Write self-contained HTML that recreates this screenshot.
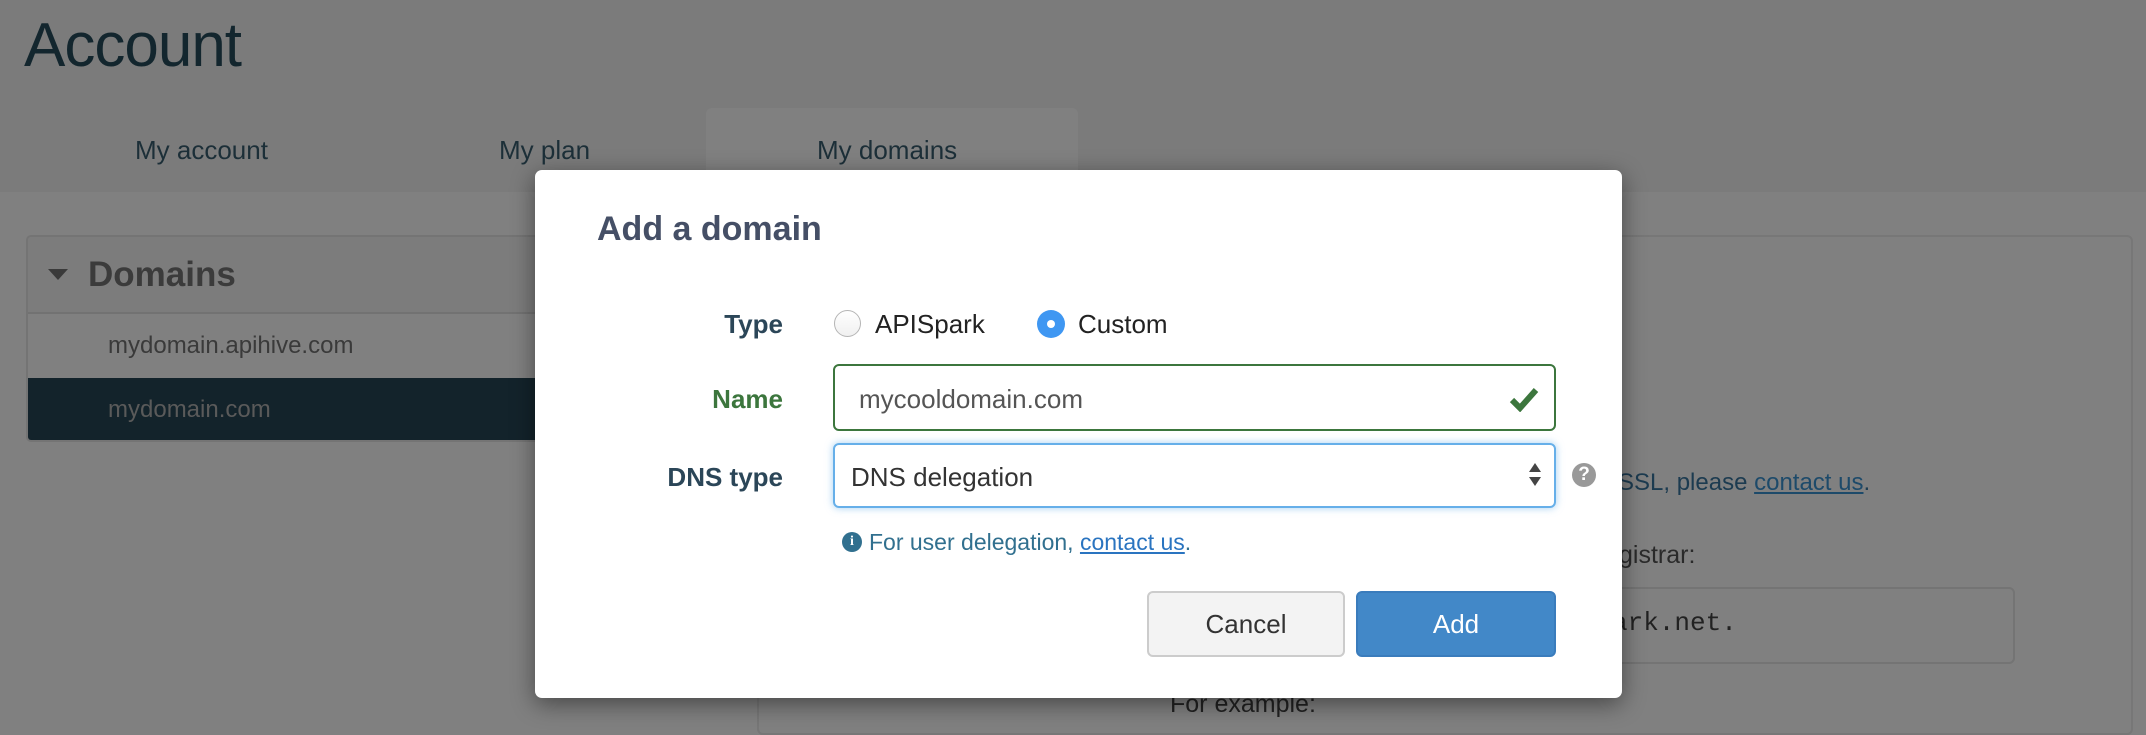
<!DOCTYPE html>
<html><head><meta charset="utf-8"><style>
*{box-sizing:border-box;margin:0;padding:0}
body{width:2146px;height:722px;overflow:hidden;background:#808080;font-family:"Liberation Sans",Arial,sans-serif;position:relative}
.a{position:absolute;white-space:nowrap}
</style></head><body>
<div class="a" style="left:0;top:0;width:2146px;height:192px;background:#7b7b7b"></div>
<div class="a" style="left:24px;top:10px;font-size:62px;color:#13262e;letter-spacing:-1px">Account</div>
<div class="a" style="left:706px;top:108px;width:372px;height:84px;background:#808080;border-radius:6px 6px 0 0"></div>
<div class="a" style="left:135px;top:135px;font-size:26px;color:#1c2f38">My account</div>
<div class="a" style="left:499px;top:135px;font-size:26px;color:#1c2f38">My plan</div>
<div class="a" style="left:817px;top:135px;font-size:26px;color:#1c2f38">My domains</div>

<div class="a" style="left:26px;top:235px;width:560px;height:207px;border:2px solid #747474;border-radius:5px;overflow:hidden">
 <div style="height:77px;background:#7c7c7c;border-bottom:2px solid #727272;position:relative">
  <div class="a" style="left:20px;top:32px;width:0;height:0;border-left:10px solid transparent;border-right:10px solid transparent;border-top:11px solid #3a3a3a"></div>
  <div class="a" style="left:60px;top:18px;font-size:35px;font-weight:bold;color:#3b3b3b">Domains</div>
 </div>
 <div style="height:64px;position:relative"><div class="a" style="left:80px;top:18px;font-size:24px;color:#3a3a3a">mydomain.apihive.com</div></div>
 <div style="height:66px;background:#13232b;position:relative"><div class="a" style="left:80px;top:18px;font-size:24px;color:#5a5a5a">mydomain.com</div></div>
</div>

<div class="a" style="left:757px;top:235px;width:1376px;height:500px;border:2px solid #777;border-radius:6px"></div>
<div class="a" style="left:1618px;top:469px;font-size:24px;color:#1c3b50">SSL, please <span style="text-decoration:underline;color:#1d4a6a">contact us</span>.</div>
<div class="a" style="left:1619px;top:541px;font-size:25px;color:#2a2a2a">gistrar:</div>
<div class="a" style="left:1200px;top:587px;width:815px;height:77px;border:2px solid #747474;border-radius:6px"></div>
<div class="a" style="left:1612px;top:608px;font-size:26px;font-family:'Liberation Mono',monospace;color:#222">ark.net.</div>
<div class="a" style="left:1170px;top:690px;font-size:25px;color:#222">For example:</div>

<div class="a" style="left:535px;top:170px;width:1087px;height:528px;background:#fff;border-radius:7px;box-shadow:0 6px 24px rgba(0,0,0,.45)">
 <div class="a" style="left:62px;top:40px;font-size:34px;font-weight:bold;color:#454f66">Add a domain</div>
 <div class="a" style="left:0;width:248px;text-align:right;top:139px;font-size:26px;font-weight:bold;color:#2b4658">Type</div>
 <div class="a" style="left:299px;top:140px;width:27px;height:27px;border:1.5px solid #b5b5b5;border-radius:50%;background:linear-gradient(#fff,#f0f0f0)"></div>
 <div class="a" style="left:340px;top:139px;font-size:26px;color:#222">APISpark</div>
 <div class="a" style="left:502px;top:140px;width:28px;height:28px;border-radius:50%;background:#3f97f2"><div class="a" style="left:10px;top:10px;width:8px;height:8px;border-radius:50%;background:#fff"></div></div>
 <div class="a" style="left:543px;top:139px;font-size:26px;color:#222">Custom</div>

 <div class="a" style="left:0;width:248px;text-align:right;top:214px;font-size:26px;font-weight:bold;color:#3c763d">Name</div>
 <div class="a" style="left:298px;top:194px;width:723px;height:67px;border:2px solid #3c763d;border-radius:6px">
  <div class="a" style="left:24px;top:18px;font-size:26px;color:#555">mycooldomain.com</div>
  <svg class="a" style="left:674px;top:20px" width="30" height="26" viewBox="0 0 30 26"><path d="M3 14 L11 22 L27 4" stroke="#3c763d" stroke-width="6" fill="none"/></svg>
 </div>

 <div class="a" style="left:0;width:248px;text-align:right;top:292px;font-size:26px;font-weight:bold;color:#2b4658">DNS type</div>
 <div class="a" style="left:298px;top:273px;width:723px;height:65px;border:2px solid #66afe9;border-radius:6px;box-shadow:0 0 8px rgba(102,175,233,.6)">
  <div class="a" style="left:16px;top:17px;font-size:26px;color:#333">DNS delegation</div>
  <div class="a" style="left:694px;top:18px;width:0;height:0;border-left:6px solid transparent;border-right:6px solid transparent;border-bottom:9px solid #444"></div>
  <div class="a" style="left:694px;top:32px;width:0;height:0;border-left:6px solid transparent;border-right:6px solid transparent;border-top:9px solid #444"></div>
 </div>
 <div class="a" style="left:1037px;top:293px;width:24px;height:24px;border-radius:50%;background:#999;color:#fff;font-size:19px;font-weight:bold;text-align:center;line-height:24px">?</div>

 <div class="a" style="left:307px;top:362px;width:20px;height:20px;border-radius:50%;background:#31708f;color:#fff;font-size:14px;font-weight:bold;text-align:center;line-height:20px;font-family:'Liberation Serif',serif">i</div>
 <div class="a" style="left:334px;top:359px;font-size:23px;color:#31708f">For user delegation, <span style="text-decoration:underline;color:#2a74c0">contact us</span>.</div>

 <div class="a" style="left:612px;top:421px;width:198px;height:66px;background:#f3f3f3;border:2px solid #ccc;border-radius:6px;font-size:26px;color:#333;text-align:center;line-height:62px">Cancel</div>
 <div class="a" style="left:821px;top:421px;width:200px;height:66px;background:#4288c8;border:2px solid #3a7cbc;border-radius:6px;font-size:26px;color:#fff;text-align:center;line-height:62px">Add</div>
</div>
</body></html>
